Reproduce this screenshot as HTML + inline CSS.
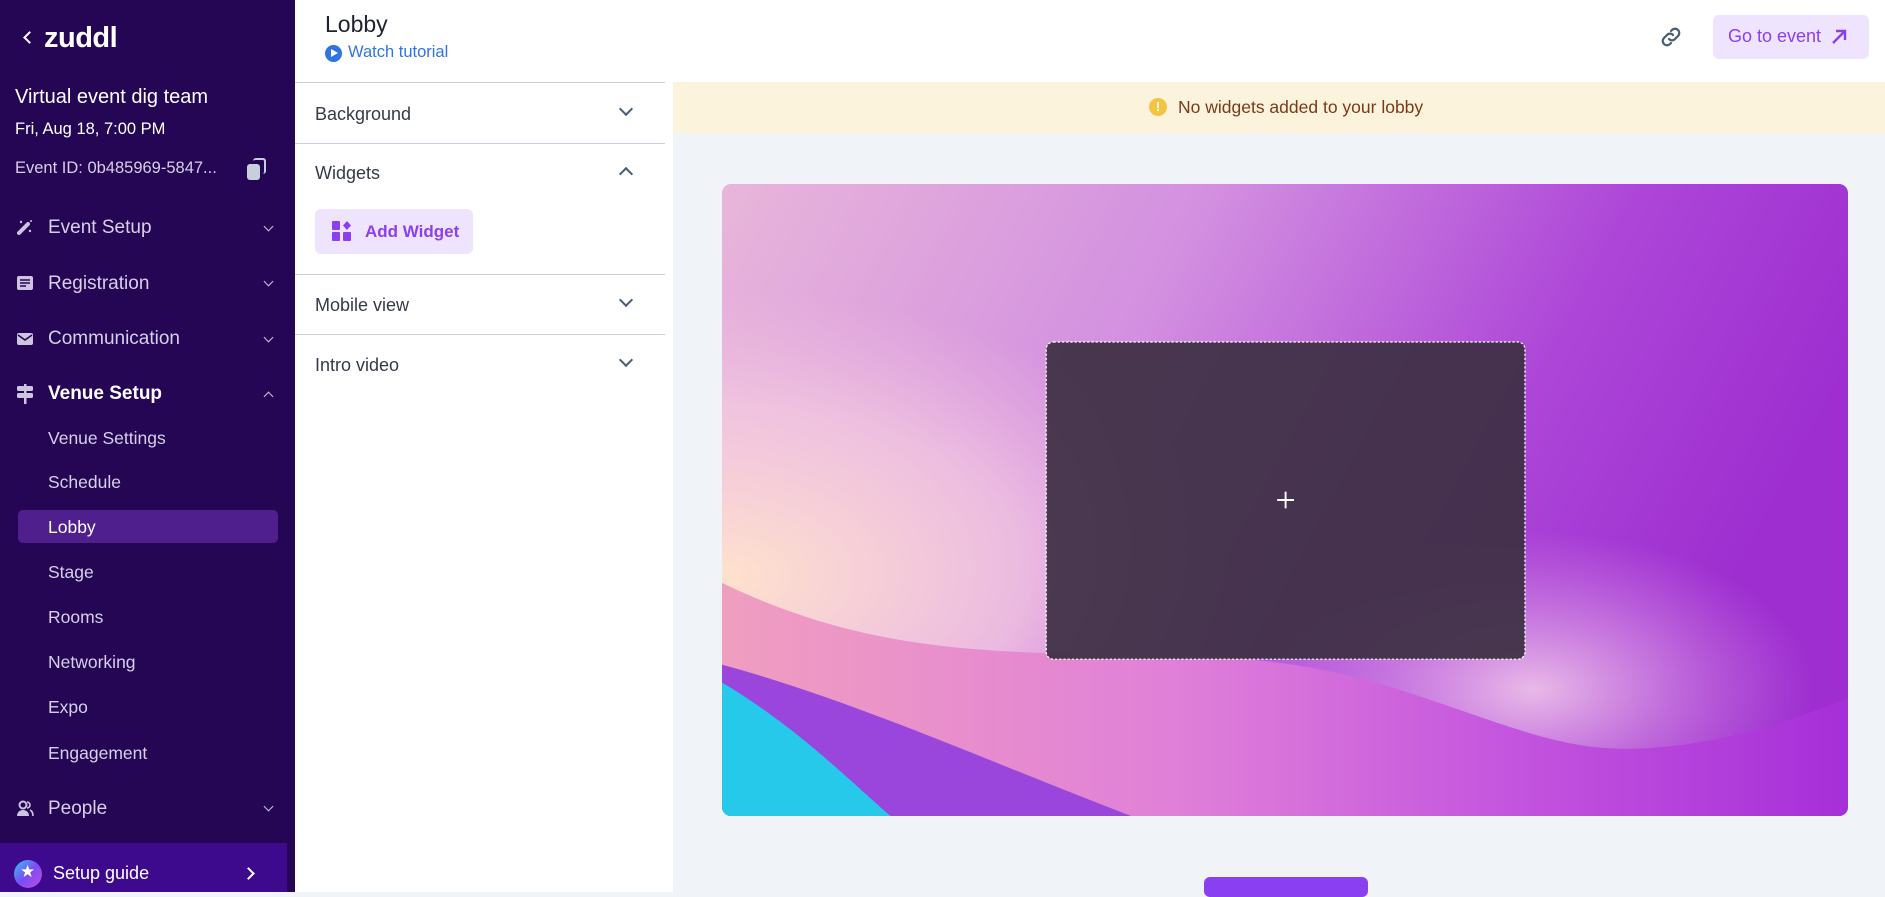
<!DOCTYPE html>
<html><head><meta charset="utf-8"><style>
*{margin:0;padding:0;box-sizing:border-box}
body{width:1885px;height:892px;overflow:hidden;font-family:"Liberation Sans",sans-serif;background:#f0f3f8;position:relative}
.abs{position:absolute}
#sb{left:0;top:0;width:295px;height:892px;background:#240654;color:#fff}
.mi{position:absolute;left:48px;font-size:19px;color:#d9cfe9;line-height:24px}
.si{position:absolute;left:48px;font-size:17.5px;color:#d9cfe9;line-height:22px}
.chev{position:absolute;left:265px;width:7px;height:7px;border-right:1.5px solid #cfc4e0;border-bottom:1.5px solid #cfc4e0;transform:rotate(45deg)}
.ic{position:absolute;left:16px}
#lp{left:295px;top:82px;width:378px;height:810px;background:#fff}
.ph{position:absolute;left:20px;font-size:18px;color:#333b46}
.pc{position:absolute;left:326px;width:10px;height:10px;border-right:2px solid #4a5d73;border-bottom:2px solid #4a5d73}
.dv{position:absolute;left:0;width:370px;height:1px;background:#c9d3e0}
</style></head><body>
<div id="sb" class="abs">
 <div class="abs" style="left:25px;top:33px;width:9px;height:9px;border-left:2px solid #fff;border-bottom:2px solid #fff;transform:rotate(45deg)"></div>
 <div class="abs" style="left:44px;top:22px;font-size:29px;font-weight:bold;letter-spacing:-0.5px;color:#fff">zuddl</div>
 <div class="abs" style="left:15px;top:86px;font-size:20px;color:#fff">Virtual event dig team</div>
 <div class="abs" style="left:15px;top:120px;font-size:16.5px;color:#fff">Fri, Aug 18, 7:00 PM</div>
 <div class="abs" style="left:15px;top:159px;font-size:16.5px;color:#d9cfe9">Event ID: 0b485969-5847...</div>
 <div class="abs" style="left:247px;top:164px;width:13px;height:16px;background:#c6cfdc;border-radius:3px"></div>
 <div class="abs" style="left:253px;top:158px;width:13px;height:16px;border:2px solid #c6cfdc;border-left:none;border-bottom:none;border-radius:3px"></div>

 <svg class="ic" style="top:218px" width="18" height="18" viewBox="0 0 18 18"><path d="M3 15 L12 6" stroke="#cfc4e0" stroke-width="4" stroke-linecap="round"/><circle cx="5" cy="4" r="1.2" fill="#cfc4e0"/><circle cx="14" cy="13" r="1.2" fill="#cfc4e0"/><circle cx="15" cy="3" r="1" fill="#cfc4e0"/></svg>
 <div class="mi" style="top:216px">Event Setup</div><div class="chev" style="top:223px"></div>
 <svg class="ic" style="top:274px" width="18" height="18" viewBox="0 0 18 18"><rect x="1" y="2" width="16" height="14" rx="2" fill="#cfc4e0"/><path d="M4 6h10M4 9h10M4 12h6" stroke="#240654" stroke-width="1.5"/></svg>
 <div class="mi" style="top:272px">Registration</div><div class="chev" style="top:278px"></div>
 <svg class="ic" style="top:330px" width="18" height="18" viewBox="0 0 18 18"><rect x="1" y="3" width="16" height="12" rx="2" fill="#cfc4e0"/><path d="M2 5l7 5 7-5" stroke="#240654" stroke-width="1.6" fill="none"/></svg>
 <div class="mi" style="top:327px">Communication</div><div class="chev" style="top:334px"></div>
 <svg class="ic" style="top:384px" width="18" height="20" viewBox="0 0 18 20"><rect x="1" y="2" width="16" height="5" rx="1.5" fill="#cfc4e0"/><rect x="1" y="9" width="16" height="5" rx="1.5" fill="#cfc4e0"/><rect x="8" y="0" width="2.5" height="20" fill="#cfc4e0"/></svg>
 <div class="mi" style="top:382px;color:#fff;font-weight:bold">Venue Setup</div><div class="chev" style="top:393px;transform:rotate(-135deg)"></div>
 <div class="si" style="top:427px">Venue Settings</div>
 <div class="si" style="top:471px">Schedule</div>
 <div class="abs" style="left:18px;top:510px;width:260px;height:33px;background:#4e1f8d;border-radius:5px"></div>
 <div class="si" style="top:516px;color:#fff">Lobby</div>
 <div class="si" style="top:561px">Stage</div>
 <div class="si" style="top:606px">Rooms</div>
 <div class="si" style="top:651px">Networking</div>
 <div class="si" style="top:696px">Expo</div>
 <div class="si" style="top:742px">Engagement</div>
 <svg class="ic" style="top:799px" width="18" height="18" viewBox="0 0 18 18"><circle cx="7" cy="6" r="3.5" fill="none" stroke="#cfc4e0" stroke-width="2"/><path d="M1 17c0-4 3-6 6-6s6 2 6 6z" fill="#cfc4e0"/><path d="M11 3a3 3 0 010 6M14 11c2 1 3 3 3 6" stroke="#cfc4e0" stroke-width="1.6" fill="none"/></svg>
 <div class="mi" style="top:797px">People</div><div class="chev" style="top:803px"></div>
 <div class="abs" style="left:0;top:843px;width:287px;height:49px;background:#3d0a8e"></div>
 <div class="abs" style="left:14px;top:860px;width:28px;height:28px;border-radius:50%;background:linear-gradient(135deg,#36c6f0,#7a4cf5 50%,#c24ce0)"></div>
 <div class="abs" style="left:20px;top:862px;color:#fff;font-size:17px">★</div>
 <div class="abs" style="left:53px;top:863px;font-size:18px;color:#fff">Setup guide</div>
 <div class="abs" style="left:244px;top:869px;width:9px;height:9px;border-right:2px solid #fff;border-top:2px solid #fff;transform:rotate(45deg)"></div>
</div>

<div class="abs" style="left:295px;top:0;width:1590px;height:82px;background:#fff"></div>
<div class="abs" style="left:325px;top:11px;font-size:23px;color:#1d2330">Lobby</div>
<div class="abs" style="left:325px;top:45px;width:17px;height:17px;border-radius:50%;background:#2f74e0"></div>
<div class="abs" style="left:331px;top:49px;width:0;height:0;border-left:7px solid #fff;border-top:4.5px solid transparent;border-bottom:4.5px solid transparent"></div>
<div class="abs" style="left:348px;top:43px;font-size:16.5px;color:#2f74e0">Watch tutorial</div>
<svg class="abs" style="left:1659px;top:25px" width="24" height="24" viewBox="0 0 24 24" fill="none" stroke="#4a5d73" stroke-width="2.2" stroke-linecap="round"><path d="M10 14a4 4 0 006 0l3-3a4 4 0 00-6-6l-1 1"/><path d="M14 10a4 4 0 00-6 0l-3 3a4 4 0 006 6l1-1"/></svg>
<div class="abs" style="left:1713px;top:15px;width:156px;height:44px;background:#efe4fd;border-radius:6px"></div>
<div class="abs" style="left:1728px;top:26px;font-size:18px;color:#8a3ff0">Go to event</div>
<svg class="abs" style="left:1830px;top:28px" width="18" height="18" viewBox="0 0 18 18" fill="none" stroke="#8a3ff0" stroke-width="2.4"><path d="M3 15L15 3M6 3h9v9"/></svg>

<div class="abs" style="left:673px;top:82px;width:1212px;height:51px;background:#fcf3dd"></div>
<div class="abs" style="left:1149px;top:98px;width:18px;height:18px;border-radius:50%;background:#f5c342;color:#fff;font-size:13px;font-weight:bold;text-align:center;line-height:18px">!</div>
<div class="abs" style="left:1178px;top:97px;font-size:17.5px;color:#7a3a17">No widgets added to your lobby</div>

<div id="lp" class="abs">
 <div class="dv" style="top:0"></div>
 <div class="ph" style="left:20px;top:22px">Background</div><div class="pc" style="top:22px;transform:rotate(45deg)"></div>
 <div class="dv" style="top:61px"></div>
 <div class="ph" style="top:81px">Widgets</div><div class="pc" style="top:87px;transform:rotate(-135deg)"></div>
 <div class="abs" style="left:20px;top:127px;width:158px;height:45px;background:#efe4fd;border-radius:6px"></div>
 <svg class="abs" style="left:37px;top:139px" width="20" height="20" viewBox="0 0 20 20" fill="#8a3ff0"><rect x="0" y="0" width="8" height="9" rx="1"/><rect x="0" y="11" width="8" height="9" rx="1"/><rect x="11" y="11" width="8" height="9" rx="1"/><path d="M15 0l4 4.5-4 4.5-4-4.5z"/></svg>
 <div class="abs" style="left:70px;top:140px;font-size:17px;font-weight:bold;color:#8a3ff0">Add Widget</div>
 <div class="dv" style="top:192px"></div>
 <div class="ph" style="top:213px">Mobile view</div><div class="pc" style="top:213px;transform:rotate(45deg)"></div>
 <div class="dv" style="top:252px"></div>
 <div class="ph" style="top:273px">Intro video</div><div class="pc" style="top:273px;transform:rotate(45deg)"></div>
</div>

<svg class="abs" style="left:722px;top:184px;border-radius:9px" width="1126" height="632" viewBox="0 0 936 526" preserveAspectRatio="none">
<defs>
<linearGradient id="bg" x1="0" y1="0" x2="1" y2="0.3"><stop offset="0" stop-color="#e8b6da"/><stop offset="0.4" stop-color="#d390e0"/><stop offset="0.75" stop-color="#ad46d8"/><stop offset="1" stop-color="#9e2ed0"/></linearGradient>
<radialGradient id="pe" cx="0" cy="0.62" r="0.45"><stop offset="0" stop-color="#ffe2cc"/><stop offset="0.6" stop-color="#f6cde0" stop-opacity="0.7"/><stop offset="1" stop-color="#f0c0e0" stop-opacity="0"/></radialGradient>
<radialGradient id="lb" cx="0.72" cy="0.8" r="0.25"><stop offset="0" stop-color="#f0c8ea" stop-opacity="0.9"/><stop offset="1" stop-color="#e0a0e8" stop-opacity="0"/></radialGradient>
<linearGradient id="pk" x1="0" y1="0" x2="1" y2="0"><stop offset="0" stop-color="#f09ec0"/><stop offset="0.4" stop-color="#e080d8"/><stop offset="0.7" stop-color="#c455de"/><stop offset="1" stop-color="#a62fd8"/></linearGradient>
</defs>
<rect width="936" height="526" fill="url(#bg)"/>
<rect width="936" height="526" fill="url(#pe)"/>
<rect width="936" height="526" fill="url(#lb)"/>
<path d="M0 332 C120 390 220 390 350 392 C420 393 480 395 560 420 C640 445 690 470 750 470 C820 470 880 450 936 428 L936 526 L0 526 Z" fill="url(#pk)"/>
<path d="M0 400 C110 430 220 480 340 526 L0 526 Z" fill="#9a45dc"/>
<path d="M0 415 C60 450 110 500 140 526 L0 526 Z" fill="#27c9ea"/>
<rect x="269.5" y="131.5" width="398" height="264" rx="6" fill="#3d2f44" fill-opacity="0.93" stroke="#fff" stroke-width="1" stroke-dasharray="2 1.5"/>
<path d="M468.5 256v14M461.5 263h14" stroke="#fff" stroke-width="1.6"/>
</svg>

<div class="abs" style="left:1204px;top:877px;width:164px;height:20px;background:#8a3ff0;border-radius:6px"></div>
</body></html>
